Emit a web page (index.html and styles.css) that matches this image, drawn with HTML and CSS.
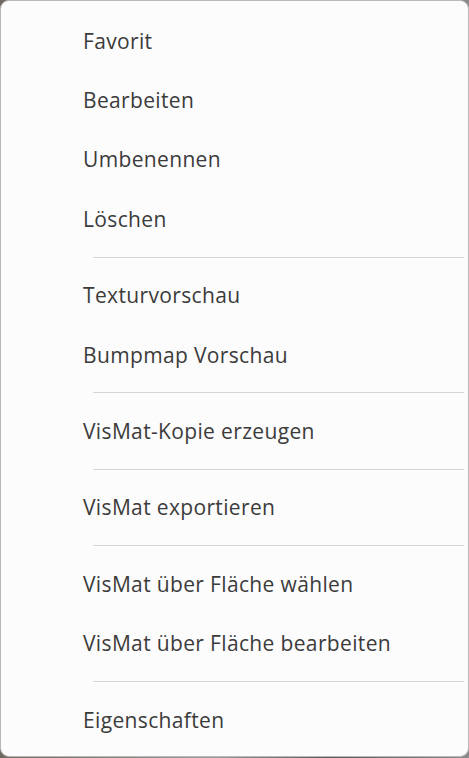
FILE: index.html
```html
<!DOCTYPE html>
<html lang="de">
<head>
<meta charset="utf-8">
<title>Kontextmenü</title>
<link rel="stylesheet" href="styles.css">
</head>
<body>
<div class="menu" role="menu">
  <div class="item" role="menuitem">Favorit</div>
  <div class="item" role="menuitem">Bearbeiten</div>
  <div class="item" role="menuitem">Umbenennen</div>
  <div class="item" role="menuitem">Löschen</div>
  <div class="sep"></div>
  <div class="item" role="menuitem">Texturvorschau</div>
  <div class="item" role="menuitem">Bumpmap Vorschau</div>
  <div class="sep"></div>
  <div class="item" role="menuitem">VisMat-Kopie erzeugen</div>
  <div class="sep"></div>
  <div class="item" role="menuitem">VisMat exportieren</div>
  <div class="sep"></div>
  <div class="item" role="menuitem">VisMat über Fläche wählen</div>
  <div class="item" role="menuitem">VisMat über Fläche bearbeiten</div>
  <div class="sep"></div>
  <div class="item" role="menuitem">Eigenschaften</div>
</div>
</body>
</html>
```
FILE: styles.css
```css
html, body {
  margin: 0;
  padding: 0;
}
body {
  width: 469px;
  height: 758px;
  background: linear-gradient(90deg, #6e6a62 0%, #9c9c9c 45%, #5a5a5a 70%, #8a8a8a 100%);
  font-family: "Open Sans", "Noto Sans", sans-serif;
  overflow: hidden;
}
.menu {
  box-sizing: border-box;
  width: 469px;
  height: 757px;
  background: #fcfcfc;
  border: 1px solid #b9b9b9;
  border-radius: 9px;
  padding-top: 10px;
  display: flex;
  flex-direction: column;
}
.item {
  height: 59.4px;
  display: flex;
  align-items: center;
  padding-left: 82px;
  font-size: 21px;
  color: #3b3b3b;
  letter-spacing: 0.35px;
  white-space: nowrap;
}
.sep {
  height: 17px;
  display: flex;
  align-items: center;
  padding-left: 92px;
  padding-right: 4px;
}
.sep::before {
  content: "";
  flex: 1;
  height: 1px;
  background: #d6d6d6;
}
```
